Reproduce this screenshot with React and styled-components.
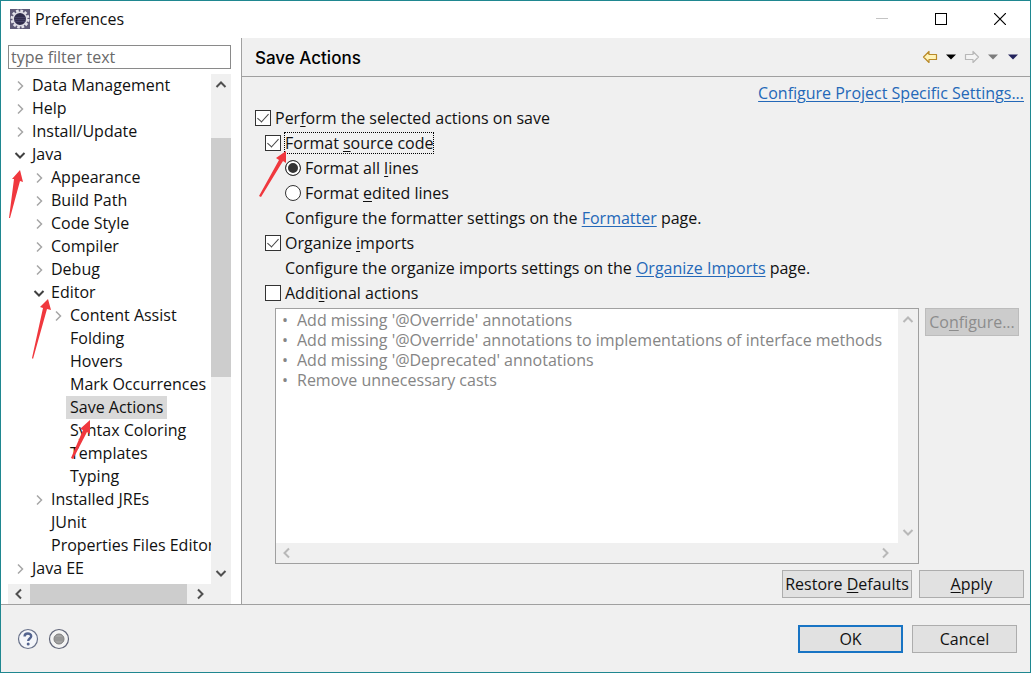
import React from "react";
import styled, { createGlobalStyle } from "styled-components";

const treeItems = [
  { label: "Data Management", level: 0, state: "closed" },
  { label: "Help", level: 0, state: "closed" },
  { label: "Install/Update", level: 0, state: "closed" },
  { label: "Java", level: 0, state: "open" },
  { label: "Appearance", level: 1, state: "closed" },
  { label: "Build Path", level: 1, state: "closed" },
  { label: "Code Style", level: 1, state: "closed" },
  { label: "Compiler", level: 1, state: "closed" },
  { label: "Debug", level: 1, state: "closed" },
  { label: "Editor", level: 1, state: "open" },
  { label: "Content Assist", level: 2, state: "closed" },
  { label: "Folding", level: 2 },
  { label: "Hovers", level: 2 },
  { label: "Mark Occurrences", level: 2 },
  { label: "Save Actions", level: 2, selected: true },
  { label: "Syntax Coloring", level: 2 },
  { label: "Templates", level: 2 },
  { label: "Typing", level: 2 },
  { label: "Installed JREs", level: 1, state: "closed" },
  { label: "JUnit", level: 1 },
  { label: "Properties Files Editor", level: 1 },
  { label: "Java EE", level: 0, state: "closed" },
];

const additionalActions = [
  "Add missing '@Override' annotations",
  "Add missing '@Override' annotations to implementations of interface methods",
  "Add missing '@Deprecated' annotations",
  "Remove unnecessary casts",
];

const chevrons = {
  up: "M1.5 8 L6 3.5 L10.5 8",
  down: "M1.5 4 L6 8.5 L10.5 4",
  left: "M8 1.5 L3.5 6 L8 10.5",
  right: "M4 1.5 L8.5 6 L4 10.5",
};

const Chevron = ({ dir, color = "#505050", size = 12, width = 2 }) => (
  <svg width={size} height={size} viewBox="0 0 12 12" fill="none">
    <path d={chevrons[dir]} stroke={color} strokeWidth={width} />
  </svg>
);

const AppIcon = () => (
  <svg width="20" height="20" viewBox="0 0 20 20">
    <rect width="20" height="20" fill="#5f5a78" />
    <circle cx="10" cy="10" r="8" fill="none" stroke="#e4e2ea" strokeWidth="3" strokeDasharray="2.6 1.6" />
    <circle cx="10" cy="10" r="6.8" fill="#302c4c" stroke="#dddbe4" strokeWidth="1.6" />
    <path d="M4.5 8.5h11M4 10.5h12M4.5 12.5h11" stroke="#4a456b" strokeWidth="0.8" />
  </svg>
);

const HistoryArrow = ({ forward }) => (
  <svg width="16" height="14" viewBox="0 0 16 14">
    <path
      d={
        forward
          ? "M14.5 7 L9 1.5 V4.5 H1.5 V9.5 H9 V12.5 Z"
          : "M1.5 7 L7 1.5 V4.5 H14.5 V9.5 H7 V12.5 Z"
      }
      fill={forward ? "#f4f4f4" : "#fff3b8"}
      stroke={forward ? "#b8b8b8" : "#b98a28"}
      strokeWidth="1.2"
      strokeLinejoin="round"
    />
  </svg>
);

const Caret = ({ color }) => (
  <svg width="10" height="6" viewBox="0 0 10 6">
    <path d="M0 0.5 H10 L5 5.5 Z" fill={color} />
  </svg>
);

const Pointer = ({ points }) => <polygon points={points} fill="#f0383e" />;

const Scrollbar = ({ vertical, disabled, start, length }) => {
  const color = disabled ? "#b8b8b8" : "#505050";
  return (
    <Track $vertical={vertical}>
      <TrackButton
        type="button"
        disabled={disabled}
        $vertical={vertical}
        aria-label={vertical ? "Scroll up" : "Scroll left"}
      >
        <Chevron dir={vertical ? "up" : "left"} color={color} />
      </TrackButton>
      <Rail $vertical={vertical}>
        {length && <Thumb $vertical={vertical} $start={start} $length={length} />}
      </Rail>
      <TrackButton
        type="button"
        disabled={disabled}
        $vertical={vertical}
        aria-label={vertical ? "Scroll down" : "Scroll right"}
      >
        <Chevron dir={vertical ? "down" : "right"} color={color} />
      </TrackButton>
    </Track>
  );
};

const App = () => (
  <>
    <GlobalStyle />
    <Window>
      <TitleBar>
        <AppIcon />
        <WindowTitle>Preferences</WindowTitle>
        <WindowButtons>
          <WindowButton type="button" aria-label="Minimize" disabled>
            <svg width="12" height="12"><path d="M0 5.5H12" stroke="#c4c4c4" /></svg>
          </WindowButton>
          <WindowButton type="button" aria-label="Maximize">
            <svg width="12" height="12"><rect x="0.5" y="0.5" width="11" height="11" fill="none" stroke="#000" /></svg>
          </WindowButton>
          <WindowButton type="button" aria-label="Close">
            <svg width="12" height="12"><path d="M0 0L12 12M12 0L0 12" stroke="#000" strokeWidth="1.2" /></svg>
          </WindowButton>
        </WindowButtons>
      </TitleBar>

      <Body>
        <Sidebar>
          <Filter type="text" placeholder="type filter text" aria-label="type filter text" />
          <TreeFrame>
            <TreeRow>
              <Tree>
                {treeItems.map((item) => (
                  <TreeItem key={item.label} $level={item.level}>
                    <Expander>
                      {item.state === "closed" && <Chevron dir="right" color="#a6a6a6" width={1.5} />}
                      {item.state === "open" && <Chevron dir="down" color="#404040" />}
                    </Expander>
                    <TreeLabel $selected={item.selected}>{item.label}</TreeLabel>
                  </TreeItem>
                ))}
              </Tree>
              <Scrollbar vertical start={42} length={239} />
            </TreeRow>
            <TreeFooter>
              <Scrollbar start={0} length={157} />
            </TreeFooter>
            <TreePointers width="100" height="400" viewBox="0 70 100 400">
              <Pointer points="20,170 23,182 20,181 10,218 9,218 14,179 12,179" />
              <Pointer points="48,299 51,310 47,309 33,359 32,358 43,308 40,307" />
              <Pointer points="90,420 90,434 87,432 73,459 71,458 83,430 80,429" />
            </TreePointers>
          </TreeFrame>
        </Sidebar>

        <Page>
          <PageHeader>
            <PageTitle>Save Actions</PageTitle>
            <ToolBar>
              <ToolButton type="button" aria-label="Back"><HistoryArrow /></ToolButton>
              <ToolButton type="button" aria-label="Back history"><Caret color="#000" /></ToolButton>
              <ToolButton type="button" aria-label="Forward" disabled><HistoryArrow forward /></ToolButton>
              <ToolButton type="button" aria-label="Forward history" disabled><Caret color="#7c7c7c" /></ToolButton>
              <MenuButton type="button" aria-label="View menu"><Caret color="#23235c" /></MenuButton>
            </ToolBar>
          </PageHeader>

          <PageContent>
            <LinkRow>
              <Link href="#project">Configure Project Specific Settings...</Link>
            </LinkRow>
            <Option $indent={0}>
              <Checkbox id="perform" defaultChecked />
              <label htmlFor="perform">Per<u>f</u>orm the selected actions on save</label>
            </Option>
            <Option $indent={10}>
              <Checkbox id="format" defaultChecked />
              <FocusedLabel htmlFor="format">
                Format <u>s</u>ource code
                <FormatPointer width="30" height="48" viewBox="258 151 30 48">
                  <Pointer points="286,151 286,163 283,161 261,197 259,196 279,160 276,158" />
                </FormatPointer>
              </FocusedLabel>
            </Option>
            <Option $indent={30}>
              <Radio id="all" name="lines" defaultChecked />
              <label htmlFor="all">Format all <u>l</u>ines</label>
            </Option>
            <Option $indent={30}>
              <Radio id="edited" name="lines" />
              <label htmlFor="edited">Format <u>e</u>dited lines</label>
            </Option>
            <Option $indent={30}>
              <p>Configure the formatter settings on the <Link href="#formatter">Formatter</Link> page.</p>
            </Option>
            <Option $indent={10}>
              <Checkbox id="organize" defaultChecked />
              <label htmlFor="organize">Organize <u>i</u>mports</label>
            </Option>
            <Option $indent={30}>
              <p>Configure the organize imports settings on the <Link href="#imports">Organize Imports</Link> page.</p>
            </Option>
            <Option $indent={10}>
              <Checkbox id="additional" />
              <label htmlFor="additional">Addi<u>t</u>ional actions</label>
            </Option>

            <ActionsRow>
              <ActionsBox>
                <ActionsMain>
                  <ActionsList>
                    {additionalActions.map((action) => (
                      <li key={action}>{action}</li>
                    ))}
                  </ActionsList>
                  <Scrollbar vertical disabled />
                </ActionsMain>
                <ActionsFooter>
                  <Scrollbar disabled />
                </ActionsFooter>
              </ActionsBox>
              <Button type="button" $width={94} disabled>
                <span>Co<u>n</u>figure...</span>
              </Button>
            </ActionsRow>

            <PageButtons>
              <Button type="button" $width={130}><span>Restore <u>D</u>efaults</span></Button>
              <Button type="button" $width={105}><span><u>A</u>pply</span></Button>
            </PageButtons>
          </PageContent>
        </Page>
      </Body>

      <Footer>
        <RoundButton type="button" aria-label="Help">
          <svg width="22" height="22" viewBox="0 0 22 22" fill="none">
            <circle cx="11" cy="11" r="9.5" fill="#f4f6fa" stroke="#68718a" strokeWidth="1.2" />
            <path d="M7.6 8.4C7.6 4.6 14.2 4.7 14.2 8.2C14.2 10.4 11.2 10.6 11.2 13" stroke="#53648f" strokeWidth="2.4" />
            <circle cx="11.2" cy="16" r="1.5" fill="#53648f" />
          </svg>
        </RoundButton>
        <RoundButton type="button" aria-label="Record preferences">
          <svg width="22" height="22" viewBox="0 0 22 22">
            <circle cx="11" cy="11" r="9.5" fill="#f4f4f4" stroke="#606578" strokeWidth="1.2" />
            <circle cx="11" cy="11" r="5" fill="#a2a2a2" stroke="#7c7c7c" />
            <path d="M7 10h8M7 12h8" stroke="#8b8b8b" />
          </svg>
        </RoundButton>
        <DialogButtons>
          <Button type="button" $width={105} $primary>OK</Button>
          <Button type="button" $width={105}>Cancel</Button>
        </DialogButtons>
      </Footer>
    </Window>
  </>
);

export default App;

const GlobalStyle = createGlobalStyle`
  * {
    box-sizing: border-box;
  }
  body {
    margin: 0;
    font-family: "Open Sans", "Noto Sans", sans-serif;
    font-size: 16px;
    line-height: 20px;
    color: #111;
  }
  button, input {
    font: inherit;
    color: inherit;
  }
  p, ul, h1, h2 {
    margin: 0;
    padding: 0;
  }
  ul {
    list-style: none;
  }
  svg {
    display: block;
    flex: none;
  }
  u {
    text-underline-offset: 2px;
  }
`;

const Window = styled.div`
  display: flex;
  flex-direction: column;
  height: 100vh;
  min-height: 520px;
  border: 1px solid #1f8790;
  background: #fff;
`;

const TitleBar = styled.header`
  display: flex;
  align-items: center;
  height: 37px;
  padding: 0 1px 1px 9px;
  gap: 5px;
`;

const WindowTitle = styled.h1`
  font-size: 16px;
  font-weight: 400;
`;

const WindowButtons = styled.div`
  display: flex;
  margin-left: auto;
`;

const WindowButton = styled.button`
  display: flex;
  align-items: center;
  justify-content: center;
  width: 59px;
  height: 36px;
  padding: 0;
  border: none;
  background: none;
`;

const Body = styled.div`
  display: flex;
  flex: 1;
  min-height: 0;
`;

const Sidebar = styled.aside`
  display: flex;
  flex-direction: column;
  width: 241px;
  flex: none;
  padding: 7px 10px 0 7px;
  border-right: 1px solid #a0a0a0;
`;

const Filter = styled.input`
  height: 24px;
  width: 100%;
  flex: none;
  padding: 0 2px;
  border: 1px solid #8a8a8a;
  background: #fff;
  &::placeholder {
    color: #6a6a6a;
    opacity: 1;
  }
`;

const TreeFrame = styled.div`
  position: relative;
  display: flex;
  flex-direction: column;
  flex: 1;
  min-height: 0;
  margin-top: 5px;
`;

const TreeRow = styled.div`
  display: flex;
  flex: 1;
  min-height: 0;
`;

const Tree = styled.ul`
  flex: 1;
  min-width: 0;
  overflow: hidden;
`;

const TreeItem = styled.li`
  display: flex;
  align-items: center;
  height: 23px;
  padding-left: ${(props) => 6 + props.$level * 19}px;
`;

const Expander = styled.span`
  display: flex;
  width: 14px;
  flex: none;
`;

const TreeLabel = styled.span`
  padding: 0 4px;
  line-height: 23px;
  white-space: nowrap;
  background: ${(props) => (props.$selected ? "#d9d9d9" : "transparent")};
`;

const TreeFooter = styled.div`
  padding-right: 20px;
  background: #f0f0f0;
`;

const TreePointers = styled.svg`
  position: absolute;
  top: -4px;
  left: -8px;
  pointer-events: none;
`;

const Track = styled.div`
  display: flex;
  flex: none;
  flex-direction: ${(props) => (props.$vertical ? "column" : "row")};
  ${(props) => (props.$vertical ? "width: 20px;" : "height: 20px;")}
  background: #f0f0f0;
`;

const TrackButton = styled.button`
  display: flex;
  align-items: center;
  justify-content: center;
  width: ${(props) => (props.$vertical ? 20 : 22)}px;
  height: ${(props) => (props.$vertical ? 22 : 20)}px;
  flex: none;
  padding: 0;
  border: none;
  background: none;
`;

const Rail = styled.div`
  display: flex;
  flex: 1;
  flex-direction: ${(props) => (props.$vertical ? "column" : "row")};
`;

const Thumb = styled.div`
  background: #cdcdcd;
  ${(props) =>
    props.$vertical
      ? `height: ${props.$length}px; margin-top: ${props.$start}px;`
      : `width: ${props.$length}px; margin-left: ${props.$start}px;`}
`;

const Page = styled.main`
  display: flex;
  flex-direction: column;
  flex: 1;
  min-width: 0;
  background: #f0f0f0;
`;

const PageHeader = styled.div`
  display: flex;
  align-items: center;
  justify-content: space-between;
  height: 39px;
  flex: none;
  padding: 0 12px 0 13px;
  border-bottom: 1px solid #a0a0a0;
`;

const PageTitle = styled.h2`
  padding-top: 2px;
  font-family: Inter, "Liberation Sans", sans-serif;
  font-size: 17px;
  font-weight: 500;
  color: #000;
`;

const ToolBar = styled.div`
  display: flex;
  align-items: center;
  gap: 8px;
`;

const ToolButton = styled.button`
  padding: 0;
  border: none;
  background: none;
`;

const MenuButton = styled(ToolButton)`
  margin-left: 2px;
`;

const PageContent = styled.div`
  display: flex;
  flex-direction: column;
  flex: 1;
  min-height: 0;
  padding: 0 6px 6px 13px;
`;

const LinkRow = styled.div`
  height: 28px;
  flex: none;
  padding-top: 6px;
  text-align: right;
`;

const Link = styled.a`
  color: #2468b8;
  text-decoration: underline;
  text-underline-offset: 2px;
`;

const Option = styled.div`
  display: flex;
  align-items: center;
  gap: 4px;
  height: 25px;
  flex: none;
  padding-left: ${(props) => props.$indent}px;
`;

const Checkbox = styled.input.attrs({ type: "checkbox" })`
  appearance: none;
  display: flex;
  justify-content: center;
  width: 16px;
  height: 16px;
  flex: none;
  margin: 0;
  border: 1px solid #333;
  background: #fff;
  &:checked::after {
    content: "";
    width: 5px;
    height: 10px;
    border: solid #444;
    border-width: 0 1px 1px 0;
    transform: rotate(42deg);
  }
`;

const Radio = styled.input.attrs({ type: "radio" })`
  appearance: none;
  width: 16px;
  height: 16px;
  flex: none;
  margin: 0;
  border: 1px solid #333;
  border-radius: 50%;
  background: #fff;
  &:checked {
    background: #333;
    box-shadow: inset 0 0 0 2px #fff;
  }
`;

const FocusedLabel = styled.label`
  position: relative;
  outline: 1px dotted #000;
`;

const FormatPointer = styled.svg`
  position: absolute;
  top: 18px;
  left: -27px;
  pointer-events: none;
`;

const ActionsRow = styled.div`
  display: flex;
  align-items: flex-start;
  flex: 1;
  min-height: 0;
  gap: 6px;
  padding: 3px 5px 0 20px;
`;

const ActionsBox = styled.div`
  display: flex;
  flex-direction: column;
  align-self: stretch;
  flex: 1;
  min-width: 0;
  border: 1px solid #a0a0a0;
  background: #fff;
`;

const ActionsMain = styled.div`
  display: flex;
  flex: 1;
  min-height: 0;
`;

const ActionsList = styled.ul`
  flex: 1;
  min-width: 0;
  padding: 1px 6px;
  overflow: hidden;
  white-space: nowrap;
  color: #858585;
  li {
    display: flex;
  }
  li::before {
    content: "•";
    width: 15px;
  }
`;

const ActionsFooter = styled.div`
  padding-right: 22px;
  background: #f0f0f0;
`;

const Button = styled.button`
  width: ${(props) => props.$width}px;
  height: 28px;
  flex: none;
  padding: 0;
  white-space: nowrap;
  border: ${(props) => (props.$primary ? "2px solid #1874c4" : "1px solid #adadad")};
  background: #e1e1e1;
  &:disabled {
    color: #8c8c8c;
    background: #cccccc;
    border-color: #bcbcbc;
  }
`;

const PageButtons = styled.div`
  display: flex;
  justify-content: flex-end;
  gap: 7px;
  margin-top: 6px;
`;

const Footer = styled.footer`
  display: flex;
  align-items: center;
  gap: 9px;
  height: 68px;
  flex: none;
  padding: 0 13px 0 16px;
  border-top: 1px solid #a0a0a0;
  background: #f0f0f0;
`;

const RoundButton = styled.button`
  padding: 0;
  border: none;
  background: none;
`;

const DialogButtons = styled.div`
  display: flex;
  gap: 9px;
  margin-left: auto;
`;
